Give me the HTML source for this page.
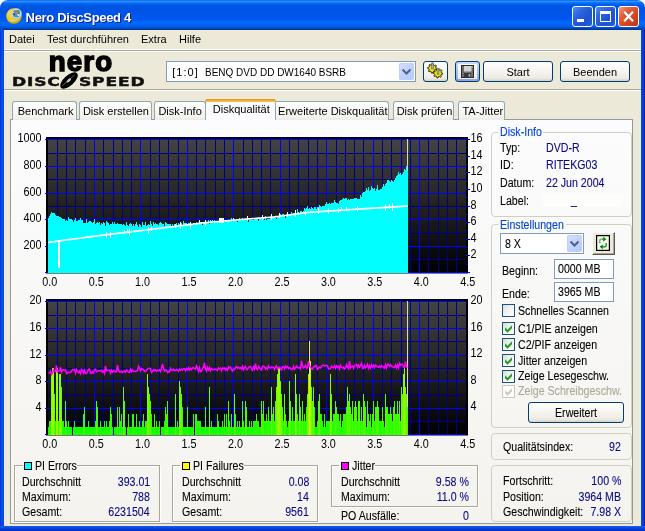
<!DOCTYPE html><html><head><meta charset="utf-8"><title>Nero DiscSpeed 4</title><style>
html,body{margin:0;padding:0;}
body{width:645px;height:531px;overflow:hidden;position:relative;background:#ECE9D8;font-family:"Liberation Sans",sans-serif;font-size:11px;}
div{box-sizing:border-box;}
.abs{position:absolute;}
.grp{position:absolute;border:1px solid #D0D0BF;border-radius:4px;}
.btn{position:absolute;border:1px solid #003C74;border-radius:3px;background:linear-gradient(#FFFFFF 0%,#F5F4EF 50%,#ECEBE5 85%,#D6D0C5 100%);}
.edit{position:absolute;border:1px solid #7F9DB9;background:#fff;}
.cb{position:absolute;width:13px;height:13px;border:1px solid #1C5180;background:linear-gradient(135deg,#DCDCD7 0%,#F3F3F0 50%,#FFFFFF 100%);}
.tab{position:absolute;top:101px;height:19px;border:1px solid #91A7B4;border-bottom:none;border-radius:3px 3px 0 0;background:linear-gradient(#FFFFFF,#F4F3EE 80%,#ECEBE6);}
</style></head><body><div id="root" style="position:absolute;left:0;top:0;width:645px;height:531px;will-change:transform;">
<div class="abs" style="left:0;top:0;width:645px;height:10px;background:#fff;"></div>
<div class="abs" style="left:0;top:0;width:645px;height:30px;background:linear-gradient(#0058EE 0%,#3593FF 4%,#288EFF 6%,#127DFF 8%,#036FFC 10%,#0262EE 14%,#0057E5 20%,#0054E3 24%,#0055EB 56%,#005BF5 66%,#026AFE 76%,#0062EF 86%,#0052D6 92%,#0040AB 96%,#003092 100%);border-radius:8px 8px 0 0;"></div>
<div class="abs" style="left:0;top:29px;width:4px;height:502px;background:linear-gradient(90deg,#0032C8,#0A50E6 40%,#0448DD);"></div>
<div class="abs" style="left:641px;top:29px;width:4px;height:502px;background:linear-gradient(90deg,#0448DD,#0A40D6 50%,#001EA0);"></div>
<div class="abs" style="left:0;top:526px;width:645px;height:5px;background:linear-gradient(#1A5CF0,#0540DD 50%,#0030C0);"></div>
<svg class="abs" style="left:6px;top:8px" width="16" height="16" viewBox="0 0 16 16">
<defs><radialGradient id="gold" cx="0.35" cy="0.35" r="0.8"><stop offset="0" stop-color="#F6E060"/><stop offset="0.6" stop-color="#E4C21C"/><stop offset="1" stop-color="#B8920C"/></radialGradient></defs>
<circle cx="8" cy="8" r="7.8" fill="url(#gold)"/>
<path d="M2.5 11 Q8 15.5 13.5 11 Q8 13 2.5 11Z" fill="#F0E4A0" opacity="0.7"/>
<circle cx="10.4" cy="5.6" r="5" fill="#EDEDED" stroke="#B4B4B4" stroke-width="0.7"/>
<circle cx="10.4" cy="5.6" r="3.9" fill="#2C9CE0"/>
<path d="M7 4.5 L8.2 7.8 L9.2 6.2Z" fill="#B01010"/>
<circle cx="7.2" cy="4.3" r="0.9" fill="#F8E020"/>
<path d="M11 2.3 L13.6 2.8 L13 4.6 L11.2 3.8Z" fill="#2E9E3C"/>
<path d="M9.2 2.6 L10.4 2 L11 4.2 L12.8 6.6 L11.8 7.2 L10 5 L8.8 3.6Z" fill="#F06A38"/>
<circle cx="12.6" cy="7" r="1.1" fill="#F4F8FF"/>
</svg>
<div style="position:absolute;top:10.20px;font-size:13px;line-height:15px;color:#fff;white-space:pre;left:25.6px;font-weight:bold;text-shadow:1px 1px 0 #0A1883;letter-spacing:-0.33px;">Nero DiscSpeed 4</div>
<div class="abs" style="left:572px;top:6px;width:21px;height:21px;border:1px solid #fff;border-radius:3px;background:linear-gradient(135deg,#4C8CF5 0%,#2A62E0 35%,#1E50D0 70%,#2A60E0 100%);"></div>
<div class="abs" style="left:595px;top:6px;width:21px;height:21px;border:1px solid #fff;border-radius:3px;background:linear-gradient(135deg,#4C8CF5 0%,#2A62E0 35%,#1E50D0 70%,#2A60E0 100%);"></div>
<div class="abs" style="left:618px;top:6px;width:21px;height:21px;border:1px solid #fff;border-radius:3px;background:linear-gradient(135deg,#F0A080 0%,#E2603A 30%,#D4431E 65%,#C03410 100%);"></div>
<div class="abs" style="left:577px;top:19px;width:7px;height:3px;background:#fff;"></div>
<div class="abs" style="left:600px;top:11px;width:11px;height:11px;border:1px solid #fff;border-top:3px solid #fff;"></div>
<svg class="abs" style="left:618px;top:6px" width="21" height="21"><path d="M6.2 5.8 L15 15.2 M15 5.8 L6.2 15.2" stroke="#fff" stroke-width="2.2" fill="none"/></svg>
<div style="position:absolute;top:32.86px;font-size:11px;line-height:13px;color:#000;white-space:pre;left:9px;">Datei</div>
<div style="position:absolute;top:32.86px;font-size:11px;line-height:13px;color:#000;white-space:pre;left:47px;">Test durchführen</div>
<div style="position:absolute;top:32.86px;font-size:11px;line-height:13px;color:#000;white-space:pre;left:141px;">Extra</div>
<div style="position:absolute;top:32.86px;font-size:11px;line-height:13px;color:#000;white-space:pre;left:179px;">Hilfe</div>
<div class="abs" style="left:4px;top:49px;width:637px;height:3px;background:#fff;"></div>
<div class="abs" style="left:4px;top:50px;width:637px;height:1px;background:#ACA899;"></div>
<div class="abs" style="left:4px;top:89px;width:637px;height:1px;background:#ACA899;"></div>
<div class="abs" style="left:4px;top:90px;width:637px;height:1px;background:#fff;"></div>
<div style="position:absolute;top:46.55px;font-size:27.7px;line-height:30px;color:#000;white-space:pre;left:48.8px;font-weight:bold;letter-spacing:1.1px;-webkit-text-stroke:1.5px #000;">nero</div>
<div class="abs" style="left:11.6px;top:74.5px;font-family:'DejaVu Sans',sans-serif;font-size:12px;line-height:14px;font-weight:bold;letter-spacing:0.6px;color:#111;-webkit-text-stroke:0.45px #111;transform-origin:0 0;transform:scale(1.42,1);white-space:pre;">DISC</div>
<div class="abs" style="left:78.8px;top:74.5px;font-family:'DejaVu Sans',sans-serif;font-size:12px;line-height:14px;font-weight:bold;letter-spacing:0.6px;color:#111;-webkit-text-stroke:0.45px #111;transform-origin:0 0;transform:scale(1.42,1);white-space:pre;">SPEED</div>
<svg class="abs" style="left:57px;top:71px" width="23" height="19"><ellipse cx="12" cy="9.5" rx="10.8" ry="5.2" transform="rotate(-42 12 9.5)" fill="#000"/><ellipse cx="11.8" cy="9.3" rx="2.8" ry="1.2" transform="rotate(-42 11.8 9.3)" fill="#E0DDCC"/><path d="M5 15 L17.5 4" stroke="#999" stroke-width="0.6" fill="none"/></svg>
<div class="edit" style="left:166px;top:61px;width:250px;height:21px;"></div>
<div style="position:absolute;top:65.86px;font-size:11px;line-height:13px;color:#000;white-space:pre;left:172.3px;letter-spacing:1.0px;">[1:0]</div>
<div style="position:absolute;top:65.86px;font-size:11px;line-height:13px;color:#000;white-space:pre;left:204.6px;transform:scaleX(0.908);transform-origin:0 0;">BENQ DVD DD DW1640 BSRB</div>
<div class="abs" style="left:399px;top:63px;width:15px;height:17px;border-radius:2px;background:linear-gradient(135deg,#D6E1FD 0%,#C3D3FD 45%,#B4C8FA 100%);box-shadow:inset 0 0 0 1px rgba(190,208,252,0.9);"></div>
<svg class="abs" style="left:399px;top:63px" width="15" height="17"><path d="M3.5 6.5 L7.5 10.5 L11.5 6.5" stroke="#4D6185" stroke-width="2" fill="none"/></svg>
<div class="btn" style="left:423px;top:61px;width:25px;height:21px;"></div>
<div class="btn" style="left:455px;top:61px;width:25px;height:21px;background:linear-gradient(#CEDCFA,#89A4E6);"></div>
<div class="abs" style="left:458px;top:64px;width:19px;height:15px;background:linear-gradient(#FBFBF9,#EEEDE6);"></div>
<div class="btn" style="left:483px;top:61px;width:70px;height:21px;"></div>
<div class="btn" style="left:560px;top:61px;width:70px;height:21px;"></div>
<div style="position:absolute;top:65.86px;font-size:11px;line-height:13px;color:#000;white-space:pre;left:418px;width:200px;text-align:center;">Start</div>
<div style="position:absolute;top:65.86px;font-size:11px;line-height:13px;color:#000;white-space:pre;left:495px;width:200px;text-align:center;">Beenden</div>
<svg class="abs" style="left:423px;top:61px" width="25" height="21"><polygon points="14.20,7.40 14.11,8.34 12.54,8.70 12.23,9.29 12.79,10.79 12.07,11.39 10.70,10.54 10.06,10.73 9.40,12.20 8.46,12.11 8.10,10.54 7.51,10.23 6.01,10.79 5.41,10.07 6.26,8.70 6.07,8.06 4.60,7.40 4.69,6.46 6.26,6.10 6.57,5.51 6.01,4.01 6.73,3.41 8.10,4.26 8.74,4.07 9.40,2.60 10.34,2.69 10.70,4.26 11.29,4.57 12.79,4.01 13.39,4.73 12.54,6.10 12.73,6.74" fill="#F4EC10" stroke="#1A1A00" stroke-width="0.9"/><polygon points="19.70,12.20 19.61,13.14 18.04,13.50 17.73,14.09 18.29,15.59 17.57,16.19 16.20,15.34 15.56,15.53 14.90,17.00 13.96,16.91 13.60,15.34 13.01,15.03 11.51,15.59 10.91,14.87 11.76,13.50 11.57,12.86 10.10,12.20 10.19,11.26 11.76,10.90 12.07,10.31 11.51,8.81 12.23,8.21 13.60,9.06 14.24,8.87 14.90,7.40 15.84,7.49 16.20,9.06 16.79,9.37 18.29,8.81 18.89,9.53 18.04,10.90 18.23,11.54" fill="#F4EC10" stroke="#1A1A00" stroke-width="0.9"/><rect x="8.6" y="2" width="2" height="6" fill="#A8A8A8" stroke="#555" stroke-width="0.5"/><path d="M8.3 2.6 L9.6 0.8 L10.9 2.6Z" fill="#888"/><rect x="14" y="7.5" width="2" height="6" fill="#A8A8A8" stroke="#555" stroke-width="0.5"/><path d="M13.7 8 L15 6.2 L16.3 8Z" fill="#888"/></svg>
<svg class="abs" style="left:461px;top:65px" width="13" height="13"><rect x="0.5" y="0.5" width="12" height="12" fill="#6E6E6E" stroke="#2A2A2A"/><rect x="3" y="1" width="7.5" height="5.5" fill="#D4D4D4"/><rect x="10.6" y="1.4" width="1" height="1.2" fill="#E8E8E8"/><rect x="3" y="8" width="7" height="4.5" fill="#3A3A3A"/><rect x="7.6" y="9" width="1.6" height="2.8" fill="#B0B0B0"/></svg>
<div class="abs" style="left:10px;top:119px;width:623px;height:405px;border:1px solid #919B9C;background:linear-gradient(#FCFCFE,#F4F3EE);"></div>
<div class="tab" style="left:12px;width:65px;"></div>
<div style="position:absolute;top:104.86px;font-size:11px;line-height:13px;color:#000;white-space:pre;left:-54.4px;width:200px;text-align:center;">Benchmark</div>
<div class="tab" style="left:79px;width:73px;"></div>
<div style="position:absolute;top:104.86px;font-size:11px;line-height:13px;color:#000;white-space:pre;left:15.900000000000006px;width:200px;text-align:center;">Disk erstellen</div>
<div class="tab" style="left:154px;width:52px;"></div>
<div style="position:absolute;top:104.86px;font-size:11px;line-height:13px;color:#000;white-space:pre;left:80.1px;width:200px;text-align:center;">Disk-Info</div>
<div class="tab" style="left:274px;width:115px;"></div>
<div style="position:absolute;top:104.86px;font-size:11px;line-height:13px;color:#000;white-space:pre;left:232.8px;width:200px;text-align:center;">Erweiterte Diskqualität</div>
<div class="tab" style="left:393px;width:61px;"></div>
<div style="position:absolute;top:104.86px;font-size:11px;line-height:13px;color:#000;white-space:pre;left:324.5px;width:200px;text-align:center;">Disk prüfen</div>
<div class="tab" style="left:458px;width:47px;"></div>
<div style="position:absolute;top:104.86px;font-size:11px;line-height:13px;color:#000;white-space:pre;left:382.8px;width:200px;text-align:center;">TA-Jitter</div>
<div class="abs" style="left:205px;top:99px;width:71px;height:21px;border:1px solid #91A7B4;border-bottom:none;border-radius:3px 3px 0 0;background:#FCFCFE;"></div>
<div class="abs" style="left:205px;top:99px;width:71px;height:3px;border-radius:3px 3px 0 0;background:linear-gradient(#E68B2C,#FFC73C);"></div>
<div style="position:absolute;top:102.86px;font-size:11px;line-height:13px;color:#000;white-space:pre;left:141.3px;width:200px;text-align:center;">Diskqualität</div>
<svg class="abs" style="left:0;top:0" width="645" height="531" viewBox="0 0 645 531" font-family="Liberation Sans, sans-serif" font-size="12" fill="#000">
<defs><linearGradient id="bg139" x1="0" y1="0" x2="0" y2="1"><stop offset="0" stop-color="#434343"/><stop offset="1" stop-color="#000"/></linearGradient></defs>
<rect x="46" y="137" width="422" height="136.5" fill="#000"/>
<rect x="48" y="139" width="418" height="134" fill="url(#bg139)"/>
<path d="M57.5 139V273 M66.5 139V273 M75.5 139V273 M85.5 139V273 M103.5 139V273 M113.5 139V273 M122.5 139V273 M131.5 139V273 M150.5 139V273 M159.5 139V273 M168.5 139V273 M178.5 139V273 M196.5 139V273 M205.5 139V273 M215.5 139V273 M224.5 139V273 M243.5 139V273 M252.5 139V273 M261.5 139V273 M270.5 139V273 M289.5 139V273 M298.5 139V273 M308.5 139V273 M317.5 139V273 M336.5 139V273 M345.5 139V273 M354.5 139V273 M363.5 139V273 M382.5 139V273 M391.5 139V273 M401.5 139V273 M410.5 139V273 M428.5 139V273 M438.5 139V273 M447.5 139V273 M456.5 139V273 M48 153.5H466 M48 179.5H466 M48 206.5H466 M48 233.5H466 M48 259.5H466" stroke="#000086" stroke-width="1" fill="none" shape-rendering="crispEdges"/>
<path d="M94.5 139V273 M140.5 139V273 M187.5 139V273 M233.5 139V273 M280.5 139V273 M326.5 139V273 M373.5 139V273 M419.5 139V273 M45 139.5H466 M45 166.5H466 M45 193.5H466 M45 219.5H466 M45 246.5H466 M45 272.5H466" stroke="#0000FF" stroke-width="1" fill="none" shape-rendering="crispEdges"/>
<path d="M466 272.5H470 M466 264.5H468 M466 255.5H470 M466 247.5H468 M466 239.5H470 M466 230.5H468 M466 222.5H470 M466 214.5H468 M466 206.5H470 M466 197.5H468 M466 189.5H470 M466 181.5H468 M466 172.5H470 M466 164.5H468 M466 156.5H470 M466 147.5H468 M466 139.5H470" stroke="#0000FF" stroke-width="1" fill="none" shape-rendering="crispEdges"/>
<rect x="407" y="139" width="1" height="133" fill="#D6D6D6" shape-rendering="crispEdges"/>
<path d="M48 273L48 218H49L49 216H50L50 214H51L51 212H52L52 213H53L53 213H54L54 213H55L55 215H56L56 216H57L57 216H58L58 216H59L59 217H60L60 217H61L61 218H62L62 219H63L63 219H64L64 219H65L65 221H66L66 220H67L67 221H68L68 217H69L69 219H70L70 219H71L71 219H72L72 220H73L73 222H74L74 220H75L75 218H76L76 221H77L77 221H78L78 220H79L79 220H80L80 218H81L81 220H82L82 220H83L83 223H84L84 223H85L85 223H86L86 219H87L87 223H88L88 222H89L89 221H90L90 221H91L91 222H92L92 223H93L93 222H94L94 219H95L95 224H96L96 223H97L97 222H98L98 223H99L99 222H100L100 225H101L101 223H102L102 224H103L103 222H104L104 223H105L105 226H106L106 221H107L107 222H108L108 223H109L109 225H110L110 224H111L111 224H112L112 222H113L113 224H114L114 222H115L115 224H116L116 224H117L117 223H118L118 224H119L119 224H120L120 224H121L121 224H122L122 225H123L123 224H124L124 225H125L125 226H126L126 222H127L127 225H128L128 226H129L129 224H130L130 223H131L131 224H132L132 226H133L133 224H134L134 226H135L135 224H136L136 222H137L137 225H138L138 227H139L139 224H140L140 225H141L141 227H142L142 222H143L143 225H144L144 225H145L145 222H146L146 226H147L147 225H148L148 224H149L149 225H150L150 221H151L151 224H152L152 226H153L153 222H154L154 224H155L155 223H156L156 224H157L157 224H158L158 225H159L159 223H160L160 222H161L161 223H162L162 224H163L163 224H164L164 226H165L165 222H166L166 223H167L167 224H168L168 224H169L169 224H170L170 224H171L171 226H172L172 224H173L173 226H174L174 224H175L175 224H176L176 223H177L177 225H178L178 223H179L179 224H180L180 223H181L181 223H182L182 225H183L183 221H184L184 223H185L185 223H186L186 223H187L187 224H188L188 223H189L189 223H190L190 223H191L191 225H192L192 225H193L193 223H194L194 225H195L195 223H196L196 222H197L197 223H198L198 223H199L199 223H200L200 222H201L201 222H202L202 225H203L203 222H204L204 223H205L205 223H206L206 222H207L207 222H208L208 220H209L209 224H210L210 220H211L211 221H212L212 220H213L213 223H214L214 220H215L215 222H216L216 222H217L217 222H218L218 221H219L219 222H220L220 223H221L221 221H222L222 220H223L223 223H224L224 222H225L225 220H226L226 220H227L227 221H228L228 220H229L229 221H230L230 220H231L231 218H232L232 221H233L233 219H234L234 221H235L235 220H236L236 221H237L237 222H238L238 220H239L239 218H240L240 219H241L241 220H242L242 218H243L243 219H244L244 220H245L245 220H246L246 220H247L247 220H248L248 222H249L249 220H250L250 220H251L251 220H252L252 220H253L253 220H254L254 218H255L255 218H256L256 219H257L257 219H258L258 221H259L259 219H260L260 219H261L261 219H262L262 219H263L263 218H264L264 220H265L265 216H266L266 220H267L267 219H268L268 219H269L269 219H270L270 217H271L271 216H272L272 218H273L273 218H274L274 216H275L275 218H276L276 219H277L277 217H278L278 217H279L279 215H280L280 214H281L281 216H282L282 214H283L283 214H284L284 215H285L285 218H286L286 216H287L287 215H288L288 215H289L289 214H290L290 215H291L291 212H292L292 214H293L293 213H294L294 213H295L295 212H296L296 213H297L297 209H298L298 212H299L299 213H300L300 211H301L301 211H302L302 212H303L303 211H304L304 208H305L305 209H306L306 208H307L307 206H308L308 209H309L309 208H310L310 209H311L311 207H312L312 208H313L313 209H314L314 207H315L315 207H316L316 209H317L317 207H318L318 207H319L319 205H320L320 206H321L321 207H322L322 206H323L323 206H324L324 206H325L325 204H326L326 202H327L327 204H328L328 204H329L329 203H330L330 204H331L331 203H332L332 203H333L333 203H334L334 200H335L335 202H336L336 203H337L337 203H338L338 204H339L339 201H340L340 200H341L341 200H342L342 199H343L343 198H344L344 199H345L345 198H346L346 198H347L347 200H348L348 199H349L349 200H350L350 199H351L351 199H352L352 199H353L353 199H354L354 198H355L355 198H356L356 198H357L357 199H358L358 199H359L359 199H360L360 195H361L361 197H362L362 193H363L363 192H364L364 192H365L365 191H366L366 188H367L367 190H368L368 187H369L369 191H370L370 190H371L371 186H372L372 188H373L373 189H374L374 188H375L375 191H376L376 189H377L377 185H378L378 190H379L379 190H380L380 189H381L381 189H382L382 187H383L383 184H384L384 186H385L385 184H386L386 183H387L387 180H388L388 180H389L389 181H390L390 182H391L391 180H392L392 181H393L393 182H394L394 180H395L395 178H396L396 176H397L397 175H398L398 172H399L399 174H400L400 173H401L401 175H402L402 174H403L403 172H404L404 169H405L405 170H406L406 166H407L407 171H408V273Z" fill="#00FFFF" shape-rendering="crispEdges"/>
<path d="M48 242.5L49 242.4L50 242.2L51 242.1L52 241.9L53 241.8L54 241.7L55 241.5L56 241.4L57 241.2L58 241.1L59 240.9L60 240.8L61 240.7L62 240.5L63 240.4L64 240.3L65 240.1L66 240.0L67 239.9L68 239.7L69 239.6L70 239.5L71 239.3L72 239.2L73 239.1L74 238.9L75 238.8L76 238.7L77 238.5L78 238.4L79 238.3L80 238.2L81 238.0L82 237.9L83 237.8L84 237.6L85 237.5L86 237.4L87 237.2L88 237.1L89 237.0L90 236.8L91 236.7L92 236.6L93 236.4L94 236.3L95 236.2L96 236.0L97 235.9L98 235.8L99 235.6L100 235.5L101 235.4L102 235.3L103 235.1L104 235.0L105 234.9L106 234.8L107 234.7L108 234.5L109 234.4L110 234.3L111 234.2L112 234.1L113 233.9L114 233.8L115 233.7L116 233.6L117 233.5L118 233.3L119 233.2L120 233.1L121 233.0L122 232.9L123 232.7L124 232.6L125 232.5L126 232.4L127 232.3L128 232.1L129 232.0L130 231.9L131 231.8L132 231.7L133 231.5L134 231.4L135 231.3L136 231.2L137 231.1L138 230.9L139 230.8L140 230.7L141 230.6L142 230.5L143 230.3L144 230.2L145 230.1L146 230.0L147 229.9L148 229.7L149 229.6L150 229.5L151 229.4L152 229.3L153 229.1L154 229.0L155 228.9L156 228.8L157 228.6L158 228.5L159 228.4L160 228.3L161 228.1L162 228.0L163 227.9L164 227.8L165 227.6L166 227.5L167 227.4L168 227.3L169 227.1L170 227.0L171 226.9L172 226.8L173 226.6L174 226.5L175 226.4L176 226.3L177 226.2L178 226.0L179 225.9L180 225.8L181 225.7L182 225.5L183 225.4L184 225.3L185 225.2L186 225.0L187 224.9L188 224.8L189 224.7L190 224.5L191 224.4L192 224.3L193 224.2L194 224.0L195 223.9L196 223.8L197 223.7L198 223.5L199 223.4L200 223.3L201 223.2L202 223.0L203 222.9L204 222.8L205 222.7L206 222.6L207 222.5L208 222.4L209 222.4L210 222.3L211 222.2L212 222.1L213 222.0L214 221.9L215 221.8L216 221.7L217 221.6L218 221.6L219 221.5L220 221.4L221 221.3L222 221.2L223 221.1L224 221.0L225 220.9L226 220.8L227 220.8L228 220.7L229 220.6L230 220.5L231 220.4L232 220.3L233 220.2L234 220.1L235 220.0L236 220.0L237 219.9L238 219.8L239 219.7L240 219.6L241 219.5L242 219.4L243 219.4L244 219.3L245 219.2L246 219.1L247 219.1L248 219.0L249 218.9L250 218.8L251 218.8L252 218.7L253 218.6L254 218.5L255 218.5L256 218.4L257 218.3L258 218.2L259 218.1L260 218.1L261 218.0L262 217.9L263 217.8L264 217.8L265 217.7L266 217.6L267 217.5L268 217.5L269 217.4L270 217.3L271 217.2L272 217.2L273 217.1L274 217.0L275 216.9L276 216.7L277 216.6L278 216.5L279 216.3L280 216.2L281 216.0L282 215.9L283 215.8L284 215.6L285 215.5L286 215.4L287 215.2L288 215.1L289 215.0L290 214.8L291 214.7L292 214.5L293 214.4L294 214.3L295 214.1L296 214.0L297 213.9L298 213.7L299 213.6L300 213.5L301 213.3L302 213.2L303 213.0L304 212.9L305 212.8L306 212.6L307 212.5L308 212.4L309 212.4L310 212.3L311 212.2L312 212.2L313 212.1L314 212.0L315 212.0L316 211.9L317 211.8L318 211.8L319 211.7L320 211.6L321 211.6L322 211.5L323 211.4L324 211.4L325 211.3L326 211.2L327 211.2L328 211.1L329 211.0L330 211.0L331 210.9L332 210.8L333 210.8L334 210.7L335 210.7L336 210.6L337 210.5L338 210.5L339 210.4L340 210.3L341 210.3L342 210.2L343 210.1L344 210.1L345 210.0L346 209.9L347 209.9L348 209.8L349 209.7L350 209.7L351 209.6L352 209.5L353 209.5L354 209.4L355 209.3L356 209.3L357 209.2L358 209.1L359 209.1L360 209.0L361 208.9L362 208.9L363 208.8L364 208.8L365 208.7L366 208.6L367 208.6L368 208.5L369 208.4L370 208.4L371 208.3L372 208.2L373 208.2L374 208.1L375 208.1L376 208.0L377 207.9L378 207.9L379 207.8L380 207.8L381 207.7L382 207.6L383 207.6L384 207.5L385 207.4L386 207.4L387 207.3L388 207.2L389 207.2L390 207.1L391 207.1L392 207.0L393 206.9L394 206.9L395 206.8L396 206.8L397 206.7L398 206.6L399 206.6L400 206.5L401 206.4L402 206.4L403 206.3L404 206.2L405 206.2L406 206.1L407 206.1L408 206.0" stroke="#fff" stroke-width="1.7" fill="none"/>
<path d="M58 241h1V268h-1zM59 241h1V268h-1zM106 232h1V238h-1zM110 232h1V238h-1zM124 230h1V234h-1zM127 229h1V233h-1zM129 229h1V236h-1zM148 227h1V234h-1zM151 227h1V231h-1zM175 224h1V228h-1zM180 222h1V229h-1zM190 222h1V229h-1zM199 220h1V224h-1zM205 220h1V227h-1zM221 218h1V223h-1zM233 218h1V221h-1zM247 216h1V221h-1zM262 215h1V220h-1zM271 214h1V220h-1zM279 213h1V218h-1zM287 212h1V217h-1zM295 210h1V217h-1zM305 211h1V216h-1zM318 208h1V214h-1zM328 208h1V214h-1zM338 208h1V213h-1zM341 207h1V211h-1zM346 207h1V211h-1zM357 206h1V212h-1zM385 204h1V211h-1zM389 204h1V209h-1zM392 203h1V211h-1z" fill="#fff" shape-rendering="crispEdges"/>
<rect x="83" y="218" width="0" height="0"/>
<rect x="219" y="218" width="5" height="5" fill="#fff"/>
<text transform="translate(41.50 142.40) scale(0.9 1)" text-anchor="end">1000</text>
<text transform="translate(41.50 169.00) scale(0.9 1)" text-anchor="end">800</text>
<text transform="translate(41.50 195.60) scale(0.9 1)" text-anchor="end">600</text>
<text transform="translate(41.50 222.20) scale(0.9 1)" text-anchor="end">400</text>
<text transform="translate(41.50 248.80) scale(0.9 1)" text-anchor="end">200</text>
<text transform="translate(470.60 258.38) scale(0.9 1)" text-anchor="start">2</text>
<text transform="translate(470.60 241.75) scale(0.9 1)" text-anchor="start">4</text>
<text transform="translate(470.60 225.12) scale(0.9 1)" text-anchor="start">6</text>
<text transform="translate(470.60 208.50) scale(0.9 1)" text-anchor="start">8</text>
<text transform="translate(470.60 191.88) scale(0.9 1)" text-anchor="start">10</text>
<text transform="translate(470.60 175.25) scale(0.9 1)" text-anchor="start">12</text>
<text transform="translate(470.60 158.62) scale(0.9 1)" text-anchor="start">14</text>
<text transform="translate(470.60 142.00) scale(0.9 1)" text-anchor="start">16</text>
<text transform="translate(49.70 285.60) scale(0.9 1)" text-anchor="middle">0.0</text>
<text transform="translate(49.70 447.60) scale(0.9 1)" text-anchor="middle">0.0</text>
<text transform="translate(96.14 285.60) scale(0.9 1)" text-anchor="middle">0.5</text>
<text transform="translate(96.14 447.60) scale(0.9 1)" text-anchor="middle">0.5</text>
<text transform="translate(142.59 285.60) scale(0.9 1)" text-anchor="middle">1.0</text>
<text transform="translate(142.59 447.60) scale(0.9 1)" text-anchor="middle">1.0</text>
<text transform="translate(189.03 285.60) scale(0.9 1)" text-anchor="middle">1.5</text>
<text transform="translate(189.03 447.60) scale(0.9 1)" text-anchor="middle">1.5</text>
<text transform="translate(235.48 285.60) scale(0.9 1)" text-anchor="middle">2.0</text>
<text transform="translate(235.48 447.60) scale(0.9 1)" text-anchor="middle">2.0</text>
<text transform="translate(281.92 285.60) scale(0.9 1)" text-anchor="middle">2.5</text>
<text transform="translate(281.92 447.60) scale(0.9 1)" text-anchor="middle">2.5</text>
<text transform="translate(328.37 285.60) scale(0.9 1)" text-anchor="middle">3.0</text>
<text transform="translate(328.37 447.60) scale(0.9 1)" text-anchor="middle">3.0</text>
<text transform="translate(374.81 285.60) scale(0.9 1)" text-anchor="middle">3.5</text>
<text transform="translate(374.81 447.60) scale(0.9 1)" text-anchor="middle">3.5</text>
<text transform="translate(421.26 285.60) scale(0.9 1)" text-anchor="middle">4.0</text>
<text transform="translate(421.26 447.60) scale(0.9 1)" text-anchor="middle">4.0</text>
<text transform="translate(467.70 285.60) scale(0.9 1)" text-anchor="middle">4.5</text>
<text transform="translate(467.70 447.60) scale(0.9 1)" text-anchor="middle">4.5</text>
<defs><linearGradient id="bg301" x1="0" y1="0" x2="0" y2="1"><stop offset="0" stop-color="#434343"/><stop offset="1" stop-color="#000"/></linearGradient></defs>
<rect x="46" y="299" width="422" height="136.5" fill="#000"/>
<rect x="48" y="301" width="418" height="134" fill="url(#bg301)"/>
<path d="M57.5 301V435 M66.5 301V435 M75.5 301V435 M85.5 301V435 M103.5 301V435 M113.5 301V435 M122.5 301V435 M131.5 301V435 M150.5 301V435 M159.5 301V435 M168.5 301V435 M178.5 301V435 M196.5 301V435 M205.5 301V435 M215.5 301V435 M224.5 301V435 M243.5 301V435 M252.5 301V435 M261.5 301V435 M270.5 301V435 M289.5 301V435 M298.5 301V435 M308.5 301V435 M317.5 301V435 M336.5 301V435 M345.5 301V435 M354.5 301V435 M363.5 301V435 M382.5 301V435 M391.5 301V435 M401.5 301V435 M410.5 301V435 M428.5 301V435 M438.5 301V435 M447.5 301V435 M456.5 301V435 M48 315.5H466 M48 341.5H466 M48 368.5H466 M48 395.5H466 M48 421.5H466" stroke="#000086" stroke-width="1" fill="none" shape-rendering="crispEdges"/>
<path d="M94.5 301V435 M140.5 301V435 M187.5 301V435 M233.5 301V435 M280.5 301V435 M326.5 301V435 M373.5 301V435 M419.5 301V435 M45 301.5H466 M45 328.5H466 M45 355.5H466 M45 381.5H466 M45 408.5H466 M45 434.5H466" stroke="#0000FF" stroke-width="1" fill="none" shape-rendering="crispEdges"/>
<text transform="translate(41.50 304.40) scale(0.9 1)" text-anchor="end">20</text>
<text transform="translate(470.60 304.00) scale(0.9 1)" text-anchor="start">20</text>
<text transform="translate(41.50 331.00) scale(0.9 1)" text-anchor="end">16</text>
<text transform="translate(470.60 330.60) scale(0.9 1)" text-anchor="start">16</text>
<text transform="translate(41.50 357.60) scale(0.9 1)" text-anchor="end">12</text>
<text transform="translate(470.60 357.20) scale(0.9 1)" text-anchor="start">12</text>
<text transform="translate(41.50 384.20) scale(0.9 1)" text-anchor="end">8</text>
<text transform="translate(470.60 383.80) scale(0.9 1)" text-anchor="start">8</text>
<text transform="translate(41.50 410.80) scale(0.9 1)" text-anchor="end">4</text>
<text transform="translate(470.60 410.40) scale(0.9 1)" text-anchor="start">4</text>
<rect x="407" y="301" width="1" height="133" fill="#D6D6D6" shape-rendering="crispEdges"/>
<path d="M48 435V427.4H49V435ZM64 435V427.4H65V435ZM67 435V427.4H68V435ZM69 435V427.4H70V435ZM70 435V427.4H71V435ZM71 435V427.4H72V435ZM73 435V427.4H74V435ZM75 435V427.4H76V435ZM76 435V427.4H77V435ZM77 435V427.4H78V435ZM78 435V427.4H79V435ZM79 435V427.4H80V435ZM80 435V427.4H81V435ZM81 435V427.4H82V435ZM82 435V427.4H83V435ZM85 435V427.4H86V435ZM86 435V427.4H87V435ZM87 435V427.4H88V435ZM89 435V427.4H90V435ZM90 435V427.4H91V435ZM91 435V427.4H92V435ZM92 435V427.4H93V435ZM93 435V427.4H94V435ZM94 435V427.4H95V435ZM98 435V427.4H99V435ZM99 435V427.4H100V435ZM101 435V427.4H102V435ZM102 435V427.4H103V435ZM103 435V427.4H104V435ZM105 435V427.4H106V435ZM107 435V427.4H108V435ZM108 435V427.4H109V435ZM112 435V427.4H113V435ZM114 435V427.4H115V435ZM115 435V427.4H116V435ZM116 435V427.4H117V435ZM118 435V427.4H119V435ZM122 435V427.4H123V435ZM125 435V427.4H126V435ZM127 435V427.4H128V435ZM129 435V427.4H130V435ZM130 435V427.4H131V435ZM131 435V427.4H132V435ZM134 435V427.4H135V435ZM135 435V427.4H136V435ZM137 435V427.4H138V435ZM138 435V427.4H139V435ZM140 435V427.4H141V435ZM141 435V427.4H142V435ZM144 435V427.4H145V435ZM152 435V427.4H153V435ZM153 435V427.4H154V435ZM155 435V427.4H156V435ZM157 435V427.4H158V435ZM158 435V427.4H159V435ZM161 435V427.4H162V435ZM162 435V427.4H163V435ZM163 435V427.4H164V435ZM168 435V427.4H169V435ZM169 435V427.4H170V435ZM170 435V427.4H171V435ZM171 435V427.4H172V435ZM172 435V427.4H173V435ZM173 435V427.4H174V435ZM174 435V427.4H175V435ZM176 435V427.4H177V435ZM178 435V427.4H179V435ZM183 435V427.4H184V435ZM184 435V427.4H185V435ZM185 435V427.4H186V435ZM186 435V427.4H187V435ZM188 435V427.4H189V435ZM189 435V427.4H190V435ZM190 435V427.4H191V435ZM191 435V427.4H192V435ZM192 435V427.4H193V435ZM201 435V427.4H202V435ZM202 435V427.4H203V435ZM203 435V427.4H204V435ZM204 435V427.4H205V435ZM206 435V427.4H207V435ZM207 435V427.4H208V435ZM208 435V427.4H209V435ZM210 435V427.4H211V435ZM212 435V427.4H213V435ZM213 435V427.4H214V435ZM214 435V427.4H215V435ZM215 435V427.4H216V435ZM216 435V427.4H217V435ZM219 435V427.4H220V435ZM220 435V427.4H221V435ZM221 435V427.4H222V435ZM223 435V427.4H224V435ZM225 435V427.4H226V435ZM227 435V427.4H228V435ZM230 435V427.4H231V435ZM232 435V427.4H233V435ZM233 435V427.4H234V435ZM236 435V427.4H237V435ZM238 435V427.4H239V435ZM240 435V427.4H241V435ZM241 435V427.4H242V435ZM244 435V427.4H245V435ZM247 435V427.4H248V435ZM248 435V427.4H249V435ZM250 435V427.4H251V435ZM252 435V427.4H253V435ZM259 435V427.4H260V435ZM260 435V427.4H261V435ZM287 435V427.4H288V435ZM315 435V427.4H316V435ZM316 435V427.4H317V435ZM323 435V427.4H324V435ZM325 435V427.4H326V435ZM341 435V427.4H342V435ZM366 435V427.4H367V435ZM371 435V427.4H372V435ZM384 435V427.4H385V435Z" fill="#0FFF00" shape-rendering="crispEdges"/>
<path d="M49 435V420.7H50V435ZM50 435V420.7H51V435ZM55 435V420.7H56V435ZM58 435V420.7H59V435ZM62 435V420.7H63V435ZM63 435V420.7H64V435ZM66 435V420.7H67V435ZM68 435V420.7H69V435ZM74 435V420.7H75V435ZM88 435V420.7H89V435ZM95 435V420.7H96V435ZM100 435V420.7H101V435ZM104 435V420.7H105V435ZM106 435V420.7H107V435ZM109 435V420.7H110V435ZM120 435V420.7H121V435ZM139 435V420.7H140V435ZM142 435V420.7H143V435ZM145 435V420.7H146V435ZM146 435V420.7H147V435ZM156 435V420.7H157V435ZM159 435V420.7H160V435ZM164 435V420.7H165V435ZM177 435V420.7H178V435ZM197 435V420.7H198V435ZM198 435V420.7H199V435ZM199 435V420.7H200V435ZM200 435V420.7H201V435ZM211 435V420.7H212V435ZM218 435V420.7H219V435ZM222 435V420.7H223V435ZM229 435V420.7H230V435ZM237 435V420.7H238V435ZM239 435V420.7H240V435ZM243 435V420.7H244V435ZM249 435V420.7H250V435ZM251 435V420.7H252V435ZM253 435V420.7H254V435ZM254 435V420.7H255V435ZM255 435V420.7H256V435ZM257 435V420.7H258V435ZM258 435V420.7H259V435ZM264 435V420.7H265V435ZM265 435V420.7H266V435ZM267 435V420.7H268V435ZM269 435V420.7H270V435ZM270 435V420.7H271V435ZM274 435V420.7H275V435ZM283 435V420.7H284V435ZM286 435V420.7H287V435ZM288 435V420.7H289V435ZM291 435V420.7H292V435ZM293 435V420.7H294V435ZM294 435V420.7H295V435ZM298 435V420.7H299V435ZM301 435V420.7H302V435ZM303 435V420.7H304V435ZM305 435V420.7H306V435ZM317 435V420.7H318V435ZM322 435V420.7H323V435ZM326 435V420.7H327V435ZM327 435V420.7H328V435ZM328 435V420.7H329V435ZM329 435V420.7H330V435ZM332 435V420.7H333V435ZM339 435V420.7H340V435ZM342 435V420.7H343V435ZM353 435V420.7H354V435ZM357 435V420.7H358V435ZM360 435V420.7H361V435ZM362 435V420.7H363V435ZM369 435V420.7H370V435ZM374 435V420.7H375V435ZM379 435V420.7H380V435ZM380 435V420.7H381V435ZM381 435V420.7H382V435ZM383 435V420.7H384V435ZM392 435V420.7H393V435ZM400 435V420.7H401V435Z" fill="#1EFF00" shape-rendering="crispEdges"/>
<path d="M51 435V374.1H52V435ZM59 435V374.1H60V435ZM60 435V374.1H61V435ZM147 435V374.1H148V435ZM277 435V374.1H278V435ZM295 435V374.1H296V435ZM308 435V374.1H309V435ZM330 435V374.1H331V435ZM403 435V374.1H404V435Z" fill="#87FF00" shape-rendering="crispEdges"/>
<path d="M52 435V367.5H53V435ZM53 435V367.5H54V435ZM56 435V367.5H57V435ZM57 435V367.5H58V435ZM278 435V367.5H279V435ZM279 435V367.5H280V435ZM404 435V367.5H405V435Z" fill="#96FF00" shape-rendering="crispEdges"/>
<path d="M54 435V394.1H55V435ZM149 435V394.1H150V435ZM175 435V394.1H176V435ZM181 435V394.1H182V435ZM234 435V394.1H235V435ZM281 435V394.1H282V435ZM284 435V394.1H285V435ZM296 435V394.1H297V435ZM299 435V394.1H300V435ZM307 435V394.1H308V435ZM319 435V394.1H320V435ZM331 435V394.1H332V435ZM349 435V394.1H350V435ZM363 435V394.1H364V435ZM385 435V394.1H386V435ZM402 435V394.1H403V435ZM406 435V394.1H407V435Z" fill="#5AFF00" shape-rendering="crispEdges"/>
<path d="M61 435V387.4H62V435ZM123 435V387.4H124V435ZM148 435V387.4H149V435ZM180 435V387.4H181V435ZM209 435V387.4H210V435ZM271 435V387.4H272V435ZM276 435V387.4H277V435ZM311 435V387.4H312V435ZM313 435V387.4H314V435ZM347 435V387.4H348V435ZM401 435V387.4H402V435ZM405 435V387.4H406V435Z" fill="#69FF00" shape-rendering="crispEdges"/>
<path d="M65 435V400.8H66V435ZM96 435V400.8H97V435ZM124 435V400.8H125V435ZM150 435V400.8H151V435ZM167 435V400.8H168V435ZM228 435V400.8H229V435ZM242 435V400.8H243V435ZM245 435V400.8H246V435ZM261 435V400.8H262V435ZM263 435V400.8H264V435ZM275 435V400.8H276V435ZM290 435V400.8H291V435ZM302 435V400.8H303V435ZM312 435V400.8H313V435ZM318 435V400.8H319V435ZM335 435V400.8H336V435ZM348 435V400.8H349V435ZM352 435V400.8H353V435ZM355 435V400.8H356V435ZM358 435V400.8H359V435ZM359 435V400.8H360V435ZM364 435V400.8H365V435ZM367 435V400.8H368V435ZM373 435V400.8H374V435ZM377 435V400.8H378V435ZM394 435V400.8H395V435ZM397 435V400.8H398V435ZM399 435V400.8H400V435Z" fill="#4BFF00" shape-rendering="crispEdges"/>
<path d="M83 435V414.1H84V435ZM111 435V414.1H112V435ZM121 435V414.1H122V435ZM128 435V414.1H129V435ZM132 435V414.1H133V435ZM133 435V414.1H134V435ZM136 435V414.1H137V435ZM143 435V414.1H144V435ZM151 435V414.1H152V435ZM154 435V414.1H155V435ZM166 435V414.1H167V435ZM193 435V414.1H194V435ZM195 435V414.1H196V435ZM196 435V414.1H197V435ZM217 435V414.1H218V435ZM224 435V414.1H225V435ZM226 435V414.1H227V435ZM231 435V414.1H232V435ZM235 435V414.1H236V435ZM256 435V414.1H257V435ZM262 435V414.1H263V435ZM266 435V414.1H267V435ZM272 435V414.1H273V435ZM285 435V414.1H286V435ZM297 435V414.1H298V435ZM304 435V414.1H305V435ZM320 435V414.1H321V435ZM321 435V414.1H322V435ZM324 435V414.1H325V435ZM333 435V414.1H334V435ZM334 435V414.1H335V435ZM337 435V414.1H338V435ZM338 435V414.1H339V435ZM340 435V414.1H341V435ZM343 435V414.1H344V435ZM344 435V414.1H345V435ZM345 435V414.1H346V435ZM351 435V414.1H352V435ZM368 435V414.1H369V435ZM370 435V414.1H371V435ZM372 435V414.1H373V435ZM388 435V414.1H389V435ZM389 435V414.1H390V435ZM391 435V414.1H392V435ZM395 435V414.1H396V435ZM396 435V414.1H397V435ZM398 435V414.1H399V435Z" fill="#2DFF00" shape-rendering="crispEdges"/>
<path d="M84 435V407.4H85V435ZM97 435V407.4H98V435ZM110 435V407.4H111V435ZM117 435V407.4H118V435ZM119 435V407.4H120V435ZM165 435V407.4H166V435ZM182 435V407.4H183V435ZM187 435V407.4H188V435ZM205 435V407.4H206V435ZM246 435V407.4H247V435ZM268 435V407.4H269V435ZM273 435V407.4H274V435ZM282 435V407.4H283V435ZM292 435V407.4H293V435ZM300 435V407.4H301V435ZM306 435V407.4H307V435ZM314 435V407.4H315V435ZM336 435V407.4H337V435ZM346 435V407.4H347V435ZM350 435V407.4H351V435ZM354 435V407.4H355V435ZM356 435V407.4H357V435ZM361 435V407.4H362V435ZM365 435V407.4H366V435ZM375 435V407.4H376V435ZM376 435V407.4H377V435ZM378 435V407.4H379V435ZM382 435V407.4H383V435ZM386 435V407.4H387V435ZM387 435V407.4H388V435ZM390 435V407.4H391V435ZM393 435V407.4H394V435ZM407 435V407.4H408V435Z" fill="#3CFF00" shape-rendering="crispEdges"/>
<path d="M179 435V380.8H180V435ZM280 435V380.8H281V435ZM289 435V380.8H290V435Z" fill="#78FF00" shape-rendering="crispEdges"/>
<path d="M309 435V340.9H310V435Z" fill="#F0FF00" shape-rendering="crispEdges"/>
<path d="M310 435V360.9H311V435Z" fill="#A5FF00" shape-rendering="crispEdges"/>
<path d="M48.5 373.4L49.5 372.7L50.5 371.5L51.5 374.4L52.5 373.2L53.5 369.8L54.5 370.5L55.5 371.4L56.5 365.5L57.5 371.9L58.5 371.2L59.5 370.7L60.5 367.3L61.5 372.0L62.5 370.1L63.5 369.9L64.5 370.5L65.5 369.8L66.5 373.7L67.5 373.1L68.5 372.1L69.5 372.7L70.5 372.3L71.5 371.3L72.5 369.8L73.5 369.7L74.5 369.4L75.5 373.2L76.5 369.5L77.5 371.3L78.5 372.9L79.5 371.2L80.5 373.6L81.5 369.3L82.5 370.1L83.5 373.1L84.5 370.2L85.5 373.6L86.5 373.6L87.5 372.2L88.5 369.2L89.5 369.1L90.5 373.3L91.5 373.5L92.5 371.8L93.5 372.9L94.5 369.6L95.5 369.2L96.5 371.8L97.5 371.2L98.5 370.8L99.5 370.7L100.5 371.2L101.5 370.2L102.5 372.1L103.5 371.0L104.5 373.4L105.5 366.0L106.5 370.5L107.5 370.5L108.5 370.2L109.5 370.1L110.5 373.2L111.5 370.2L112.5 372.1L113.5 370.5L114.5 371.6L115.5 371.5L116.5 371.8L117.5 365.1L118.5 369.8L119.5 372.1L120.5 372.0L121.5 371.1L122.5 372.6L123.5 371.5L124.5 371.0L125.5 372.3L126.5 370.0L127.5 370.9L128.5 372.4L129.5 372.1L130.5 369.1L131.5 371.7L132.5 369.9L133.5 371.3L134.5 371.5L135.5 371.6L136.5 370.9L137.5 370.9L138.5 366.3L139.5 368.7L140.5 370.8L141.5 368.4L142.5 369.3L143.5 369.6L144.5 371.4L145.5 371.6L146.5 369.9L147.5 368.9L148.5 368.4L149.5 368.3L150.5 368.4L151.5 372.5L152.5 371.8L153.5 369.5L154.5 370.6L155.5 369.7L156.5 371.3L157.5 370.2L158.5 370.8L159.5 369.9L160.5 371.6L161.5 368.1L162.5 363.8L163.5 368.3L164.5 371.1L165.5 369.9L166.5 370.1L167.5 372.3L168.5 371.7L169.5 371.9L170.5 368.3L171.5 369.9L172.5 370.7L173.5 369.2L174.5 370.5L175.5 370.6L176.5 369.5L177.5 370.3L178.5 371.2L179.5 369.2L180.5 370.3L181.5 369.1L182.5 370.3L183.5 368.7L184.5 368.7L185.5 370.8L186.5 368.7L187.5 369.9L188.5 367.8L189.5 370.1L190.5 368.2L191.5 369.7L192.5 368.0L193.5 367.7L194.5 368.7L195.5 369.1L196.5 365.9L197.5 368.1L198.5 371.3L199.5 367.6L200.5 371.6L201.5 371.1L202.5 368.5L203.5 367.2L204.5 362.7L205.5 369.2L206.5 371.1L207.5 367.2L208.5 370.0L209.5 367.7L210.5 370.7L211.5 368.6L212.5 369.6L213.5 369.6L214.5 369.5L215.5 369.1L216.5 369.5L217.5 370.6L218.5 367.8L219.5 368.9L220.5 368.3L221.5 370.6L222.5 367.8L223.5 368.8L224.5 367.9L225.5 370.0L226.5 368.5L227.5 370.1L228.5 366.7L229.5 367.9L230.5 367.1L231.5 369.9L232.5 371.0L233.5 369.3L234.5 369.4L235.5 367.4L236.5 366.4L237.5 368.2L238.5 367.1L239.5 368.4L240.5 367.6L241.5 369.1L242.5 366.4L243.5 369.8L244.5 367.5L245.5 366.4L246.5 369.7L247.5 369.6L248.5 367.5L249.5 366.6L250.5 366.7L251.5 368.8L252.5 370.3L253.5 366.8L254.5 369.0L255.5 363.7L256.5 368.6L257.5 369.6L258.5 366.2L259.5 368.1L260.5 369.3L261.5 370.0L262.5 366.3L263.5 366.1L264.5 366.9L265.5 369.1L266.5 367.4L267.5 369.2L268.5 365.9L269.5 367.9L270.5 368.1L271.5 367.0L272.5 367.7L273.5 367.3L274.5 369.5L275.5 367.2L276.5 365.9L277.5 368.7L278.5 367.5L279.5 367.2L280.5 368.7L281.5 369.9L282.5 366.6L283.5 366.7L284.5 368.9L285.5 366.0L286.5 367.7L287.5 366.5L288.5 368.5L289.5 367.5L290.5 368.4L291.5 369.5L292.5 369.5L293.5 366.3L294.5 369.1L295.5 368.0L296.5 366.1L297.5 367.1L298.5 368.0L299.5 367.4L300.5 368.9L301.5 360.8L302.5 365.6L303.5 368.0L304.5 367.0L305.5 365.2L306.5 368.3L307.5 367.4L308.5 361.1L309.5 366.6L310.5 367.2L311.5 368.7L312.5 369.4L313.5 366.6L314.5 366.9L315.5 365.4L316.5 365.8L317.5 369.3L318.5 368.4L319.5 367.0L320.5 368.0L321.5 366.2L322.5 365.4L323.5 365.1L324.5 365.9L325.5 365.6L326.5 365.3L327.5 365.8L328.5 368.8L329.5 368.9L330.5 368.5L331.5 366.0L332.5 367.3L333.5 367.8L334.5 365.7L335.5 368.3L336.5 365.8L337.5 367.4L338.5 366.3L339.5 369.1L340.5 365.4L341.5 366.9L342.5 368.1L343.5 367.2L344.5 368.9L345.5 368.2L346.5 364.6L347.5 367.1L348.5 368.7L349.5 361.2L350.5 367.9L351.5 366.7L352.5 366.0L353.5 368.3L354.5 365.4L355.5 365.1L356.5 364.5L357.5 367.6L358.5 365.0L359.5 367.1L360.5 365.5L361.5 363.2L362.5 368.3L363.5 368.5L364.5 365.6L365.5 367.7L366.5 366.4L367.5 364.3L368.5 368.4L369.5 365.7L370.5 368.1L371.5 364.6L372.5 366.7L373.5 365.3L374.5 367.6L375.5 365.0L376.5 365.8L377.5 366.7L378.5 367.3L379.5 366.1L380.5 367.6L381.5 365.5L382.5 366.5L383.5 367.6L384.5 368.2L385.5 364.7L386.5 367.8L387.5 364.3L388.5 364.1L389.5 366.1L390.5 364.8L391.5 366.4L392.5 366.3L393.5 367.6L394.5 367.6L395.5 365.1L396.5 367.8L397.5 365.0L398.5 368.0L399.5 363.5L400.5 365.4L401.5 364.3L402.5 364.3L403.5 367.0L404.5 367.5L405.5 361.5L406.5 366.9L407.5 367.5" stroke="#FF00FF" stroke-width="1.5" fill="none"/>
</svg>
<div class="grp" style="left:491px;top:132px;width:141px;height:85px;"></div>
<div class="abs" style="left:498px;top:129px;width:45px;height:8px;background:#F8F8F4;"></div>
<div style="position:absolute;top:125.17px;font-size:12.5px;line-height:15px;color:#0046D5;white-space:pre;left:500px;transform:scaleX(0.85);transform-origin:0 0;-webkit-text-stroke:0.1px;">Disk-Info</div>
<div style="position:absolute;top:140.67px;font-size:12.5px;line-height:15px;color:#000;white-space:pre;left:500px;transform:scaleX(0.85);transform-origin:0 0;-webkit-text-stroke:0.1px;">Typ:</div>
<div style="position:absolute;top:140.67px;font-size:12.5px;line-height:15px;color:#0A0A82;white-space:pre;left:546px;transform:scaleX(0.85);transform-origin:0 0;-webkit-text-stroke:0.1px;">DVD-R</div>
<div style="position:absolute;top:157.67px;font-size:12.5px;line-height:15px;color:#000;white-space:pre;left:500px;transform:scaleX(0.85);transform-origin:0 0;-webkit-text-stroke:0.1px;">ID:</div>
<div style="position:absolute;top:157.67px;font-size:12.5px;line-height:15px;color:#0A0A82;white-space:pre;left:546px;transform:scaleX(0.85);transform-origin:0 0;-webkit-text-stroke:0.1px;">RITEKG03</div>
<div style="position:absolute;top:176.17px;font-size:12.5px;line-height:15px;color:#000;white-space:pre;left:500px;transform:scaleX(0.85);transform-origin:0 0;-webkit-text-stroke:0.1px;">Datum:</div>
<div style="position:absolute;top:176.17px;font-size:12.5px;line-height:15px;color:#0A0A82;white-space:pre;left:546px;transform:scaleX(0.85);transform-origin:0 0;-webkit-text-stroke:0.1px;">22 Jun 2004</div>
<div style="position:absolute;top:193.67px;font-size:12.5px;line-height:15px;color:#000;white-space:pre;left:500px;transform:scaleX(0.85);transform-origin:0 0;-webkit-text-stroke:0.1px;">Label:</div>
<div class="abs" style="left:543px;top:194px;width:80px;height:13px;background:#FDFDFC;"></div>
<div style="position:absolute;top:193.17px;font-size:12.5px;line-height:15px;color:#0A0A82;white-space:pre;left:474px;width:200px;text-align:center;transform:scaleX(0.85);transform-origin:50% 0;-webkit-text-stroke:0.1px;">_</div>
<div class="grp" style="left:491px;top:224px;width:141px;height:204px;"></div>
<div class="abs" style="left:498px;top:221px;width:68px;height:8px;background:#F8F8F4;"></div>
<div style="position:absolute;top:217.57px;font-size:12.5px;line-height:15px;color:#0046D5;white-space:pre;left:500px;transform:scaleX(0.85);transform-origin:0 0;-webkit-text-stroke:0.1px;">Einstellungen</div>
<div class="edit" style="left:500px;top:233px;width:84px;height:21px;"></div>
<div style="position:absolute;top:237.17px;font-size:12.5px;line-height:15px;color:#000;white-space:pre;left:505px;transform:scaleX(0.85);transform-origin:0 0;-webkit-text-stroke:0.1px;">8 X</div>
<div class="abs" style="left:567px;top:235px;width:15px;height:17px;border-radius:2px;background:linear-gradient(135deg,#D6E1FD 0%,#C3D3FD 45%,#B4C8FA 100%);box-shadow:inset 0 0 0 1px rgba(190,208,252,0.9);"></div>
<svg class="abs" style="left:567px;top:235px" width="15" height="17"><path d="M3.5 6.5 L7.5 10.5 L11.5 6.5" stroke="#4D6185" stroke-width="2" fill="none"/></svg>
<div class="abs" style="left:592px;top:232px;width:23px;height:23px;background:#ECE9D8;border-top:1px solid #fff;border-left:1px solid #fff;border-right:1px solid #5A584E;border-bottom:1px solid #5A584E;box-shadow:inset -1px -1px 0 #ACA899;"></div>
<svg class="abs" style="left:596px;top:235px" width="14" height="16"><rect x="0.6" y="0.6" width="12.8" height="14.8" fill="#F6F6F0" stroke="#000" stroke-width="1.2"/><path d="M3.8 8 V5.6 Q3.8 4.2 5.2 4.2 H7.6" stroke="#008A00" stroke-width="1.2" fill="none" stroke-dasharray="1.6 0.7"/><path d="M7.2 1.8 L10.4 4.2 L7.2 6.6Z" fill="#008A00"/><path d="M10.2 8 V10.4 Q10.2 11.8 8.8 11.8 H6.4" stroke="#008A00" stroke-width="1.2" fill="none"/><path d="M6.8 9.4 L3.6 11.8 L6.8 14.2Z" fill="#008A00"/></svg>
<div style="position:absolute;top:264.17px;font-size:12.5px;line-height:15px;color:#000;white-space:pre;left:502.3px;transform:scaleX(0.85);transform-origin:0 0;-webkit-text-stroke:0.1px;">Beginn:</div>
<div style="position:absolute;top:286.67px;font-size:12.5px;line-height:15px;color:#000;white-space:pre;left:502.3px;transform:scaleX(0.85);transform-origin:0 0;-webkit-text-stroke:0.1px;">Ende:</div>
<div class="edit" style="left:554px;top:259px;width:60px;height:20px;"></div>
<div class="edit" style="left:554px;top:282px;width:60px;height:20px;"></div>
<div style="position:absolute;top:261.67px;font-size:12.5px;line-height:15px;color:#000;white-space:pre;left:557.6px;transform:scaleX(0.85);transform-origin:0 0;-webkit-text-stroke:0.1px;">0000 MB</div>
<div style="position:absolute;top:284.57px;font-size:12.5px;line-height:15px;color:#000;white-space:pre;left:557.6px;transform:scaleX(0.85);transform-origin:0 0;-webkit-text-stroke:0.1px;">3965 MB</div>
<div class="cb" style="left:502px;top:304px;border-color:#1C5180;"></div>
<div style="position:absolute;top:303.87px;font-size:12.5px;line-height:15px;color:#000;white-space:pre;left:517.8px;transform:scaleX(0.85);transform-origin:0 0;-webkit-text-stroke:0.1px;">Schnelles Scannen</div>
<div class="cb" style="left:502px;top:322px;border-color:#1C5180;"></div>
<svg class="abs" style="left:502px;top:322px" width="13" height="13"><path d="M3 5.2 L5.5 7.7 L10 3.2 V6.2 L5.5 10.7 L3 8.2 Z" fill="#21A121"/></svg>
<div style="position:absolute;top:321.87px;font-size:12.5px;line-height:15px;color:#000;white-space:pre;left:517.8px;transform:scaleX(0.85);transform-origin:0 0;-webkit-text-stroke:0.1px;">C1/PIE anzeigen</div>
<div class="cb" style="left:502px;top:338px;border-color:#1C5180;"></div>
<svg class="abs" style="left:502px;top:338px" width="13" height="13"><path d="M3 5.2 L5.5 7.7 L10 3.2 V6.2 L5.5 10.7 L3 8.2 Z" fill="#21A121"/></svg>
<div style="position:absolute;top:337.87px;font-size:12.5px;line-height:15px;color:#000;white-space:pre;left:517.8px;transform:scaleX(0.85);transform-origin:0 0;-webkit-text-stroke:0.1px;">C2/PIF anzeigen</div>
<div class="cb" style="left:502px;top:354px;border-color:#1C5180;"></div>
<svg class="abs" style="left:502px;top:354px" width="13" height="13"><path d="M3 5.2 L5.5 7.7 L10 3.2 V6.2 L5.5 10.7 L3 8.2 Z" fill="#21A121"/></svg>
<div style="position:absolute;top:353.87px;font-size:12.5px;line-height:15px;color:#000;white-space:pre;left:517.8px;transform:scaleX(0.85);transform-origin:0 0;-webkit-text-stroke:0.1px;">Jitter anzeigen</div>
<div class="cb" style="left:502px;top:369.5px;border-color:#1C5180;"></div>
<svg class="abs" style="left:502px;top:369.5px" width="13" height="13"><path d="M3 5.2 L5.5 7.7 L10 3.2 V6.2 L5.5 10.7 L3 8.2 Z" fill="#21A121"/></svg>
<div style="position:absolute;top:369.37px;font-size:12.5px;line-height:15px;color:#000;white-space:pre;left:517.8px;transform:scaleX(0.85);transform-origin:0 0;-webkit-text-stroke:0.1px;">Zeige Lesegeschw.</div>
<div class="cb" style="left:502px;top:384.6px;border-color:#CAC8BB;background:#fff;"></div>
<svg class="abs" style="left:502px;top:384.6px" width="13" height="13"><path d="M3 5.2 L5.5 7.7 L10 3.2 V6.2 L5.5 10.7 L3 8.2 Z" fill="#CAC8BB"/></svg>
<div style="position:absolute;top:384.47px;font-size:12.5px;line-height:15px;color:#ACA899;white-space:pre;left:517.8px;transform:scaleX(0.85);transform-origin:0 0;-webkit-text-stroke:0.1px;">Zeige Schreibgeschw.</div>
<div class="btn" style="left:528px;top:402px;width:96px;height:21px;"></div>
<div style="position:absolute;top:405.67px;font-size:12.5px;line-height:15px;color:#000;white-space:pre;left:476px;width:200px;text-align:center;transform:scaleX(0.85);transform-origin:50% 0;-webkit-text-stroke:0.1px;">Erweitert</div>
<div class="grp" style="left:491px;top:433px;width:141px;height:27px;"></div>
<div style="position:absolute;top:439.67px;font-size:12.5px;line-height:15px;color:#000;white-space:pre;left:502.5px;transform:scaleX(0.85);transform-origin:0 0;-webkit-text-stroke:0.1px;">Qualitätsindex:</div>
<div style="position:absolute;top:439.67px;font-size:12.5px;line-height:15px;color:#0A0A82;white-space:pre;right:24.5px;transform:scaleX(0.85);transform-origin:100% 0;-webkit-text-stroke:0.1px;">92</div>
<div class="grp" style="left:491px;top:465px;width:141px;height:57px;"></div>
<div style="position:absolute;top:473.67px;font-size:12.5px;line-height:15px;color:#000;white-space:pre;left:502.5px;transform:scaleX(0.85);transform-origin:0 0;-webkit-text-stroke:0.1px;">Fortschritt:</div>
<div style="position:absolute;top:473.67px;font-size:12.5px;line-height:15px;color:#0A0A82;white-space:pre;right:24px;transform:scaleX(0.85);transform-origin:100% 0;-webkit-text-stroke:0.1px;">100 %</div>
<div style="position:absolute;top:489.67px;font-size:12.5px;line-height:15px;color:#000;white-space:pre;left:502.5px;transform:scaleX(0.85);transform-origin:0 0;-webkit-text-stroke:0.1px;">Position:</div>
<div style="position:absolute;top:489.67px;font-size:12.5px;line-height:15px;color:#0A0A82;white-space:pre;right:24px;transform:scaleX(0.85);transform-origin:100% 0;-webkit-text-stroke:0.1px;">3964 MB</div>
<div style="position:absolute;top:504.67px;font-size:12.5px;line-height:15px;color:#000;white-space:pre;left:502.5px;transform:scaleX(0.85);transform-origin:0 0;-webkit-text-stroke:0.1px;">Geschwindigkeit:</div>
<div style="position:absolute;top:504.67px;font-size:12.5px;line-height:15px;color:#0A0A82;white-space:pre;right:24px;transform:scaleX(0.85);transform-origin:100% 0;-webkit-text-stroke:0.1px;">7.98 X</div>
<div class="abs" style="left:15px;top:466px;width:146px;height:57px;border:1px solid #fff;"></div>
<div class="abs" style="left:14px;top:465px;width:146px;height:57px;border:1px solid #ACA899;"></div>
<div class="abs" style="left:23px;top:463px;width:54px;height:8px;background:#F5F4EF;"></div>
<div class="abs" style="left:24px;top:462px;width:8px;height:8px;background:#00FFFF;border:1px solid #000;"></div>
<div style="position:absolute;top:458.57px;font-size:12.5px;line-height:15px;color:#000;white-space:pre;left:35.2px;transform:scaleX(0.85);transform-origin:0 0;-webkit-text-stroke:0.1px;">PI Errors</div>
<div style="position:absolute;top:474.67px;font-size:12.5px;line-height:15px;color:#000;white-space:pre;left:22.4px;transform:scaleX(0.85);transform-origin:0 0;-webkit-text-stroke:0.1px;">Durchschnitt</div>
<div style="position:absolute;top:474.67px;font-size:12.5px;line-height:15px;color:#0A0A82;white-space:pre;right:495px;transform:scaleX(0.85);transform-origin:100% 0;-webkit-text-stroke:0.1px;">393.01</div>
<div style="position:absolute;top:489.97px;font-size:12.5px;line-height:15px;color:#000;white-space:pre;left:22.4px;transform:scaleX(0.85);transform-origin:0 0;-webkit-text-stroke:0.1px;">Maximum:</div>
<div style="position:absolute;top:489.97px;font-size:12.5px;line-height:15px;color:#0A0A82;white-space:pre;right:495px;transform:scaleX(0.85);transform-origin:100% 0;-webkit-text-stroke:0.1px;">788</div>
<div style="position:absolute;top:504.87px;font-size:12.5px;line-height:15px;color:#000;white-space:pre;left:22.4px;transform:scaleX(0.85);transform-origin:0 0;-webkit-text-stroke:0.1px;">Gesamt:</div>
<div style="position:absolute;top:504.87px;font-size:12.5px;line-height:15px;color:#0A0A82;white-space:pre;right:495px;transform:scaleX(0.85);transform-origin:100% 0;-webkit-text-stroke:0.1px;">6231504</div>
<div class="abs" style="left:173px;top:466px;width:146px;height:57px;border:1px solid #fff;"></div>
<div class="abs" style="left:172px;top:465px;width:146px;height:57px;border:1px solid #ACA899;"></div>
<div class="abs" style="left:180px;top:463px;width:64px;height:8px;background:#F5F4EF;"></div>
<div class="abs" style="left:182px;top:462px;width:8px;height:8px;background:#FFFF00;border:1px solid #000;"></div>
<div style="position:absolute;top:458.57px;font-size:12.5px;line-height:15px;color:#000;white-space:pre;left:193.3px;transform:scaleX(0.85);transform-origin:0 0;-webkit-text-stroke:0.1px;">PI Failures</div>
<div style="position:absolute;top:474.67px;font-size:12.5px;line-height:15px;color:#000;white-space:pre;left:181.9px;transform:scaleX(0.85);transform-origin:0 0;-webkit-text-stroke:0.1px;">Durchschnitt</div>
<div style="position:absolute;top:474.67px;font-size:12.5px;line-height:15px;color:#0A0A82;white-space:pre;right:336px;transform:scaleX(0.85);transform-origin:100% 0;-webkit-text-stroke:0.1px;">0.08</div>
<div style="position:absolute;top:489.97px;font-size:12.5px;line-height:15px;color:#000;white-space:pre;left:181.9px;transform:scaleX(0.85);transform-origin:0 0;-webkit-text-stroke:0.1px;">Maximum:</div>
<div style="position:absolute;top:489.97px;font-size:12.5px;line-height:15px;color:#0A0A82;white-space:pre;right:336px;transform:scaleX(0.85);transform-origin:100% 0;-webkit-text-stroke:0.1px;">14</div>
<div style="position:absolute;top:504.87px;font-size:12.5px;line-height:15px;color:#000;white-space:pre;left:181.9px;transform:scaleX(0.85);transform-origin:0 0;-webkit-text-stroke:0.1px;">Gesamt:</div>
<div style="position:absolute;top:504.87px;font-size:12.5px;line-height:15px;color:#0A0A82;white-space:pre;right:336px;transform:scaleX(0.85);transform-origin:100% 0;-webkit-text-stroke:0.1px;">9561</div>
<div class="abs" style="left:332px;top:466px;width:147px;height:42px;border:1px solid #fff;"></div>
<div class="abs" style="left:331px;top:465px;width:147px;height:42px;border:1px solid #ACA899;"></div>
<div class="abs" style="left:339px;top:463px;width:36px;height:8px;background:#F5F4EF;"></div>
<div class="abs" style="left:341px;top:462px;width:8px;height:8px;background:#FF00FF;border:1px solid #000;"></div>
<div style="position:absolute;top:458.57px;font-size:12.5px;line-height:15px;color:#000;white-space:pre;left:351.6px;transform:scaleX(0.85);transform-origin:0 0;-webkit-text-stroke:0.1px;">Jitter</div>
<div style="position:absolute;top:474.67px;font-size:12.5px;line-height:15px;color:#000;white-space:pre;left:341px;transform:scaleX(0.85);transform-origin:0 0;-webkit-text-stroke:0.1px;">Durchschnitt</div>
<div style="position:absolute;top:474.67px;font-size:12.5px;line-height:15px;color:#0A0A82;white-space:pre;right:176.39999999999998px;transform:scaleX(0.85);transform-origin:100% 0;-webkit-text-stroke:0.1px;">9.58 %</div>
<div style="position:absolute;top:489.97px;font-size:12.5px;line-height:15px;color:#000;white-space:pre;left:341px;transform:scaleX(0.85);transform-origin:0 0;-webkit-text-stroke:0.1px;">Maximum:</div>
<div style="position:absolute;top:489.97px;font-size:12.5px;line-height:15px;color:#0A0A82;white-space:pre;right:176.39999999999998px;transform:scaleX(0.85);transform-origin:100% 0;-webkit-text-stroke:0.1px;">11.0 %</div>
<div style="position:absolute;top:508.67px;font-size:12.5px;line-height:15px;color:#000;white-space:pre;left:341px;transform:scaleX(0.85);transform-origin:0 0;-webkit-text-stroke:0.1px;">PO Ausfälle:</div>
<div style="position:absolute;top:508.67px;font-size:12.5px;line-height:15px;color:#0A0A82;white-space:pre;right:176.39999999999998px;transform:scaleX(0.85);transform-origin:100% 0;-webkit-text-stroke:0.1px;">0</div>
</div></body></html>
